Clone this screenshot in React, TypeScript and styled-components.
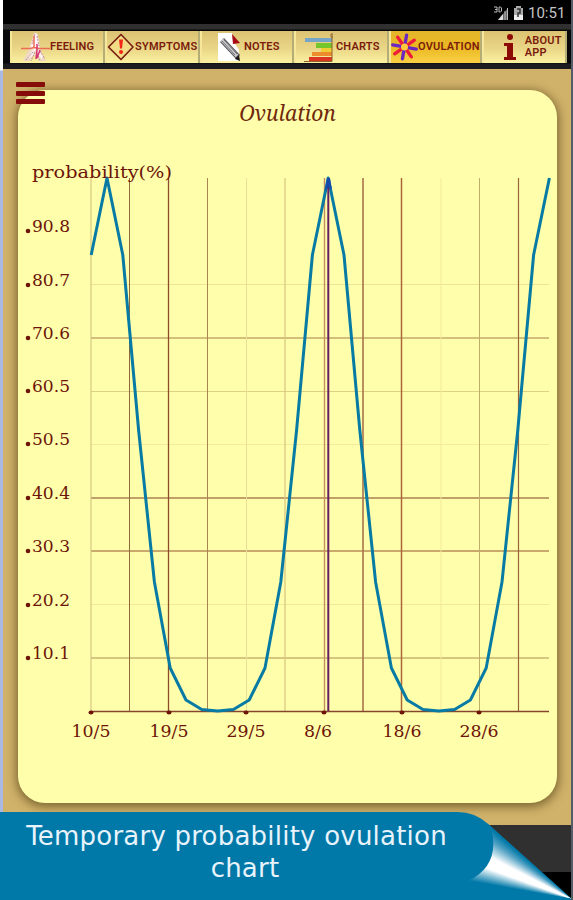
import React from 'react';
import styled, { createGlobalStyle } from 'styled-components';

const MAROON = '#6d1408';

const Global = createGlobalStyle`
  * { box-sizing: border-box; }
  body { margin: 0; background: #000; }
`;

const Screen = styled.div`
  position: relative;
  width: 573px;
  height: 900px;
  overflow: hidden;
  display: flex;
  flex-direction: column;
  background: #000;
  border-right: 2px solid #555d68;
`;

const LeftEdge = styled.div`
  position: absolute;
  left: 0;
  top: 0;
  width: 3px;
  height: 813px;
  background: linear-gradient(#fff 0 70px, #a9b9e4 71px 100%);
`;

const StatusBar = styled.header`
  height: 24px;
  flex: none;
  display: flex;
  align-items: center;
  justify-content: flex-end;
  gap: 5px;
  padding: 2px 5px 0 0;
  color: #c4c4c4;
  font: 15px Roboto, sans-serif;
`;

const Clock = styled.span`
  width: 38px;
  white-space: nowrap;
`;

const TabBar = styled.nav`
  flex: none;
  height: 45px;
  padding: 7px 4px 6px 7px;
  margin-left: 3px;
  display: flex;
  background: linear-gradient(#303030 0 5px, #08080a 6px 39px, #1c1b20 40px);
`;

const Tab = styled.button<{ $width: number; $active?: boolean; $inset?: number }>`
  flex: none;
  width: ${(p) => p.$width}px;
  height: 32px;
  padding: 0 0 0 ${(p) => p.$inset ?? 0}px;
  border: 0;
  border-right: 2px solid #b4ad76;
  border-left: 2px solid #f6e79b;
  display: flex;
  align-items: center;
  overflow: hidden;
  background: ${(p) =>
    p.$active
      ? 'linear-gradient(#e3b62b, #eab823 50%, #fad044)'
      : 'linear-gradient(#dcc273, #e9d686 55%, #fbf2a2)'};
`;

const TabLabel = styled.span`
  color: #7a1b0b;
  font: 600 11px/12px Roboto, sans-serif;
  letter-spacing: 0.2px;
  text-align: left;
  white-space: pre;
`;

const Content = styled.main`
  flex: none;
  height: 756px;
  margin-left: 3px;
  padding: 21px 14px 0 15px;
  background: #d1b26a;
`;

const Card = styled.section`
  height: 713px;
  border-radius: 27px;
  background: #ffffab;
  box-shadow: 0 2px 10px 2px rgba(70, 55, 15, 0.6);
`;

const Title = styled.h1`
  margin: 0;
  padding-top: 9px;
  height: 38px;
  text-align: center;
  color: #70280c;
  font: italic 21px/28px "Noto Serif", "Droid Serif", "DejaVu Serif", serif;
`;

const MenuButton = styled.button`
  position: absolute;
  left: 16px;
  top: 81px;
  width: 29px;
  height: 24px;
  padding: 1px 0;
  border: 0;
  background: none;
  display: flex;
  flex-direction: column;
  justify-content: space-between;
`;

const MenuLine = styled.span`
  height: 5px;
  border-radius: 1px;
  background: #850c08;
`;

const Chart = styled.svg`
  display: block;
  width: 539px;
  height: 640px;
`;

const FooterBar = styled.footer`
  flex: none;
  height: 47px;
  margin-left: 3px;
  background: #303030;
`;

const Caption = styled.div`
  position: absolute;
  left: 0;
  bottom: 0;
  width: 573px;
  height: 88px;
`;

const CaptionShape = styled.svg`
  position: absolute;
  inset: 0;
`;

const PageCurl = styled.div`
  position: absolute;
  inset: 0;
  clip-path: path('M487 11L572 87L468 69Q499 54 492 20z');
  background: conic-gradient(
    from 280deg at 572px 87px,
    #0079a8 0deg,
    #fff 10deg,
    #fff 17deg,
    #4d9fc2 26deg,
    #0079a8 31deg
  );
`;

const CaptionText = styled.p`
  position: relative;
  margin: 0;
  padding-top: 8px;
  width: 490px;
  text-align: center;
  white-space: pre-line;
  color: #e8f3fc;
  font: 26px/32px "DejaVu Sans", sans-serif;
  letter-spacing: 0.22px;
`;

const SignalIcon = () => (
  <svg width="16" height="16" viewBox="0 0 16 16">
    <path d="M5 15L15 3v12z" fill="#666" />
    <path d="M5 15l5-6v6z" fill="#ddd" />
    <path d="M12 6v9M14.5 3v12" stroke="#bbb" />
    <path d="M1 2h3v5H1m1-2.500h2M6 7V2h1.500l1 1v3l-1 1z" fill="none" stroke="#bbb" />
  </svg>
);

const BatteryIcon = () => (
  <svg width="9" height="14" viewBox="0 0 9 14">
    <path d="M0 2h2V0h5v2h2v12H0z" fill="#aaa" />
    <path d="M0 9h9v5H0z" fill="#eee" />
    <path d="M3 3h3v4H4v4" fill="none" stroke="#333" strokeWidth="1.500" />
  </svg>
);

const FeelingIcon = () => (
  <svg width="29" height="30" viewBox="0 0 29 30">
    <path d="M13 1l-3 9-2 7-4 8-2 4h7l4-7 5 7h7l-3-6-3-7-1-8-2-7z" fill="#efd9c4" />
    <path d="M14 1l-3 11 2 8 2-3 3-6-2-9z" fill="#fff7fb" />
    <path d="M11 9l-2 8 4-2zm6 0l2 9-4-2zM12 18l-6 9 7-4zm5 0l5 6-1 3-5-5z" fill="#fff2ef" />
    <path d="M14 2l-3 10m5-8l2 10M12 20l-7 8m14-9l5 8M14 20l-4 9m6-8l3 8" fill="none" stroke="#bd8c99" strokeDasharray="2 1" />
    <path d="M0 16.500h9l4-1 5 1h11M13 4v12" fill="none" stroke="#ec6c54" strokeWidth="1.500" />
    <path d="M16 12v6l-1 9m4-9l-3 8" fill="none" stroke="#d7346f" strokeWidth="1.500" />
  </svg>
);

const SymptomsIcon = () => (
  <svg width="28" height="28" viewBox="0 0 28 28">
    <path d="M14 1.500L26 14 14 26.500 1.500 14z" fill="#f3dc86" stroke="#782014" strokeWidth="1.700" strokeLinejoin="round" />
    <path d="M12 6.500h4l-1 9h-2z" fill="#f3271a" />
    <circle cx="14" cy="19" r="2" fill="#f3271a" />
  </svg>
);

const NotesIcon = () => (
  <svg width="23" height="28" viewBox="0 0 23 28">
    <path d="M0 0h14l2 9 5 8v11H0z" fill="#fff" />
    <path d="M14 1l8 9-7 1z" fill="#a80b16" />
    <path d="M4 7l16 17" stroke="#55555a" strokeWidth="5.500" />
    <path d="M4 7l15 16" stroke="#c9c9cc" strokeWidth="3.500" />
    <path d="M4 8l13 14M6 7l13 14" stroke="#77777b" />
    <path d="M17 26l5 2-1-6z" fill="#171717" />
  </svg>
);

const ChartsIcon = () => (
  <svg width="29" height="29" viewBox="0 0 29 29">
    <path d="M1 5h27v4H1z" fill="#75a6c9" />
    <path d="M12 10h16v5H12z" fill="#75c52c" />
    <path d="M17 15h11v4H17z" fill="#efcd35" />
    <path d="M8 19h20v4H8z" fill="#ed8c2c" />
    <path d="M5 24h23v4H5z" fill="#dc3522" />
    <path d="M0 28.500h28V4m-1-3h2v3h-2z" fill="none" stroke="#8c612b" />
  </svg>
);

const petals = [0, 45, 90, 135, 180, 225, 270, 315];

const OvulationIcon = () => (
  <svg width="27" height="28" viewBox="-13.500 -14 27 28">
    {petals.map((angle, i) => (
      <line
        key={angle}
        x1="0"
        y1="-3"
        x2="0"
        y2="-12"
        transform={`rotate(${angle + 10})`}
        stroke={i % 2 ? '#ee1c3a' : '#6a28c0'}
        strokeWidth="3.300"
        strokeLinecap="round"
      />
    ))}
    <circle r="3.500" fill="#ffcd3c" />
  </svg>
);

const InfoIcon = () => (
  <svg width="12" height="27" viewBox="0 0 12 27">
    <circle cx="6" cy="3" r="3" fill="#8c0c05" />
    <path d="M0 9h9v14h3v3H0v-3h3V12H0z" fill="#8c0c05" />
  </svg>
);

const verticals: [number, string, number][] = [
  [91, '#cdbd78', 1],
  [129.5, '#8f693c', 1],
  [168.5, '#8c4b2d', 1.3],
  [207.5, '#a98450', 1],
  [246.5, '#e9df98', 1],
  [285, '#d8ca84', 1.3],
  [324.5, '#c48d62', 1.4],
  [363, '#a8734d', 1.6],
  [401.5, '#a8643b', 1.5],
  [441, '#f0e99d', 1],
  [479.5, '#bfae69', 1],
  [518.5, '#94633c', 1.2],
];

const horizontals: [number, string][] = [
  [284.5, '#ede396'],
  [338, '#a87e4d'],
  [391.5, '#ded184'],
  [444.5, '#f3eaa0'],
  [498, '#824026'],
  [551, '#955531'],
  [604.5, '#f1e89c'],
  [658, '#ad8e54'],
];

const percentLabels: [string, number][] = [
  ['90.8', 231],
  ['80.7', 285],
  ['70.6', 338],
  ['60.5', 391],
  ['50.5', 444],
  ['40.4', 498],
  ['30.3', 551],
  ['20.2', 605],
  ['10.1', 658],
];

const dateLabels: [string, number][] = [
  ['10/5', 91],
  ['19/5', 169],
  ['29/5', 246],
  ['8/6', 324],
  ['18/6', 402],
  ['28/6', 479],
];

const cycle = [178, 255, 430, 582, 668, 700, 709.5, 711, 709.5, 700, 668, 582, 430, 255];
const step = 15.8;
const curve = Array.from({ length: 30 }, (_, i) => {
  const value = cycle[(i + cycle.length - 1) % cycle.length];
  return `${(91.2 + i * step).toFixed(1)},${value}`;
}).join(' ');

const ProbabilityChart = () => (
  <Chart viewBox="18 128 539 640">
    {horizontals.map(([y, color]) => (
      <line key={y} x1="91" x2="549" y1={y} y2={y} stroke={color} strokeWidth="1.200" />
    ))}
    {verticals.map(([x, color, width]) => (
      <line key={x} x1={x} x2={x} y1="178" y2="711" stroke={color} strokeWidth={width} />
    ))}
    <line x1="91" x2="549" y1="711.500" y2="711.500" stroke="#85442e" strokeWidth="1.500" />
    <polyline points={curve} fill="none" stroke="#087ba5" strokeWidth="3" strokeLinejoin="round" />
    <line x1="328.300" x2="328.300" y1="178" y2="711" stroke="#661f62" strokeWidth="2" />
    <path d="M327 178h3l2 12-3-3-4 4z" fill="#1749aa" />
    <g fill={MAROON} fontFamily='"DejaVu Serif", serif' fontSize="16">
      <text x="32" y="178" textLength="140" lengthAdjust="spacingAndGlyphs">probability(%)</text>
      {percentLabels.map(([label, y]) => (
        <React.Fragment key={label}>
          <circle cx="28" cy={y} r="2.300" />
          <text x="32" y={y + 0.5} textLength="38" lengthAdjust="spacingAndGlyphs">{label}</text>
        </React.Fragment>
      ))}
      {dateLabels.map(([label, x]) => (
        <React.Fragment key={label}>
          <ellipse cx={x} cy="712.500" rx="2.500" ry="2" />
          <text
            x={label === '8/6' ? x - 6 : x}
            y="736.500"
            textAnchor="middle"
            textLength={label === '8/6' ? 28 : 39}
            lengthAdjust="spacingAndGlyphs"
          >
            {label}
          </text>
        </React.Fragment>
      ))}
    </g>
  </Chart>
);

export default function App() {
  return (
    <>
      <Global />
      <Screen>
        <StatusBar>
          <SignalIcon />
          <BatteryIcon />
          <Clock>10:51</Clock>
        </StatusBar>
        <TabBar>
          <Tab $width={95} $inset={9}><FeelingIcon /><TabLabel>FEELING</TabLabel></Tab>
          <Tab $width={95}><SymptomsIcon /><TabLabel>SYMPTOMS</TabLabel></Tab>
          <Tab $width={94} $inset={16}><NotesIcon /><TabLabel>{' NOTES'}</TabLabel></Tab>
          <Tab $width={95} $inset={8}><ChartsIcon /><TabLabel>{' CHARTS'}</TabLabel></Tab>
          <Tab $width={93} $active><OvulationIcon /><TabLabel>OVULATION</TabLabel></Tab>
          <Tab $width={85} $inset={20}><InfoIcon /><TabLabel>{'   ABOUT\n   APP'}</TabLabel></Tab>
        </TabBar>
        <Content>
          <Card>
            <Title>Ovulation</Title>
            <ProbabilityChart />
          </Card>
        </Content>
        <FooterBar />
        <LeftEdge />
        <MenuButton aria-label="Menu"><MenuLine /><MenuLine /><MenuLine /></MenuButton>
        <Caption>
          <CaptionShape width="573" height="88" viewBox="0 0 573 88">
            <path d="M0 0H458Q475 0 488 12L572 88H0z" fill="#0079a8" />
          </CaptionShape>
          <PageCurl />
          <CaptionText>{'Temporary probability ovulation\u00a0\u00a0\nchart'}</CaptionText>
        </Caption>
      </Screen>
    </>
  );
}
